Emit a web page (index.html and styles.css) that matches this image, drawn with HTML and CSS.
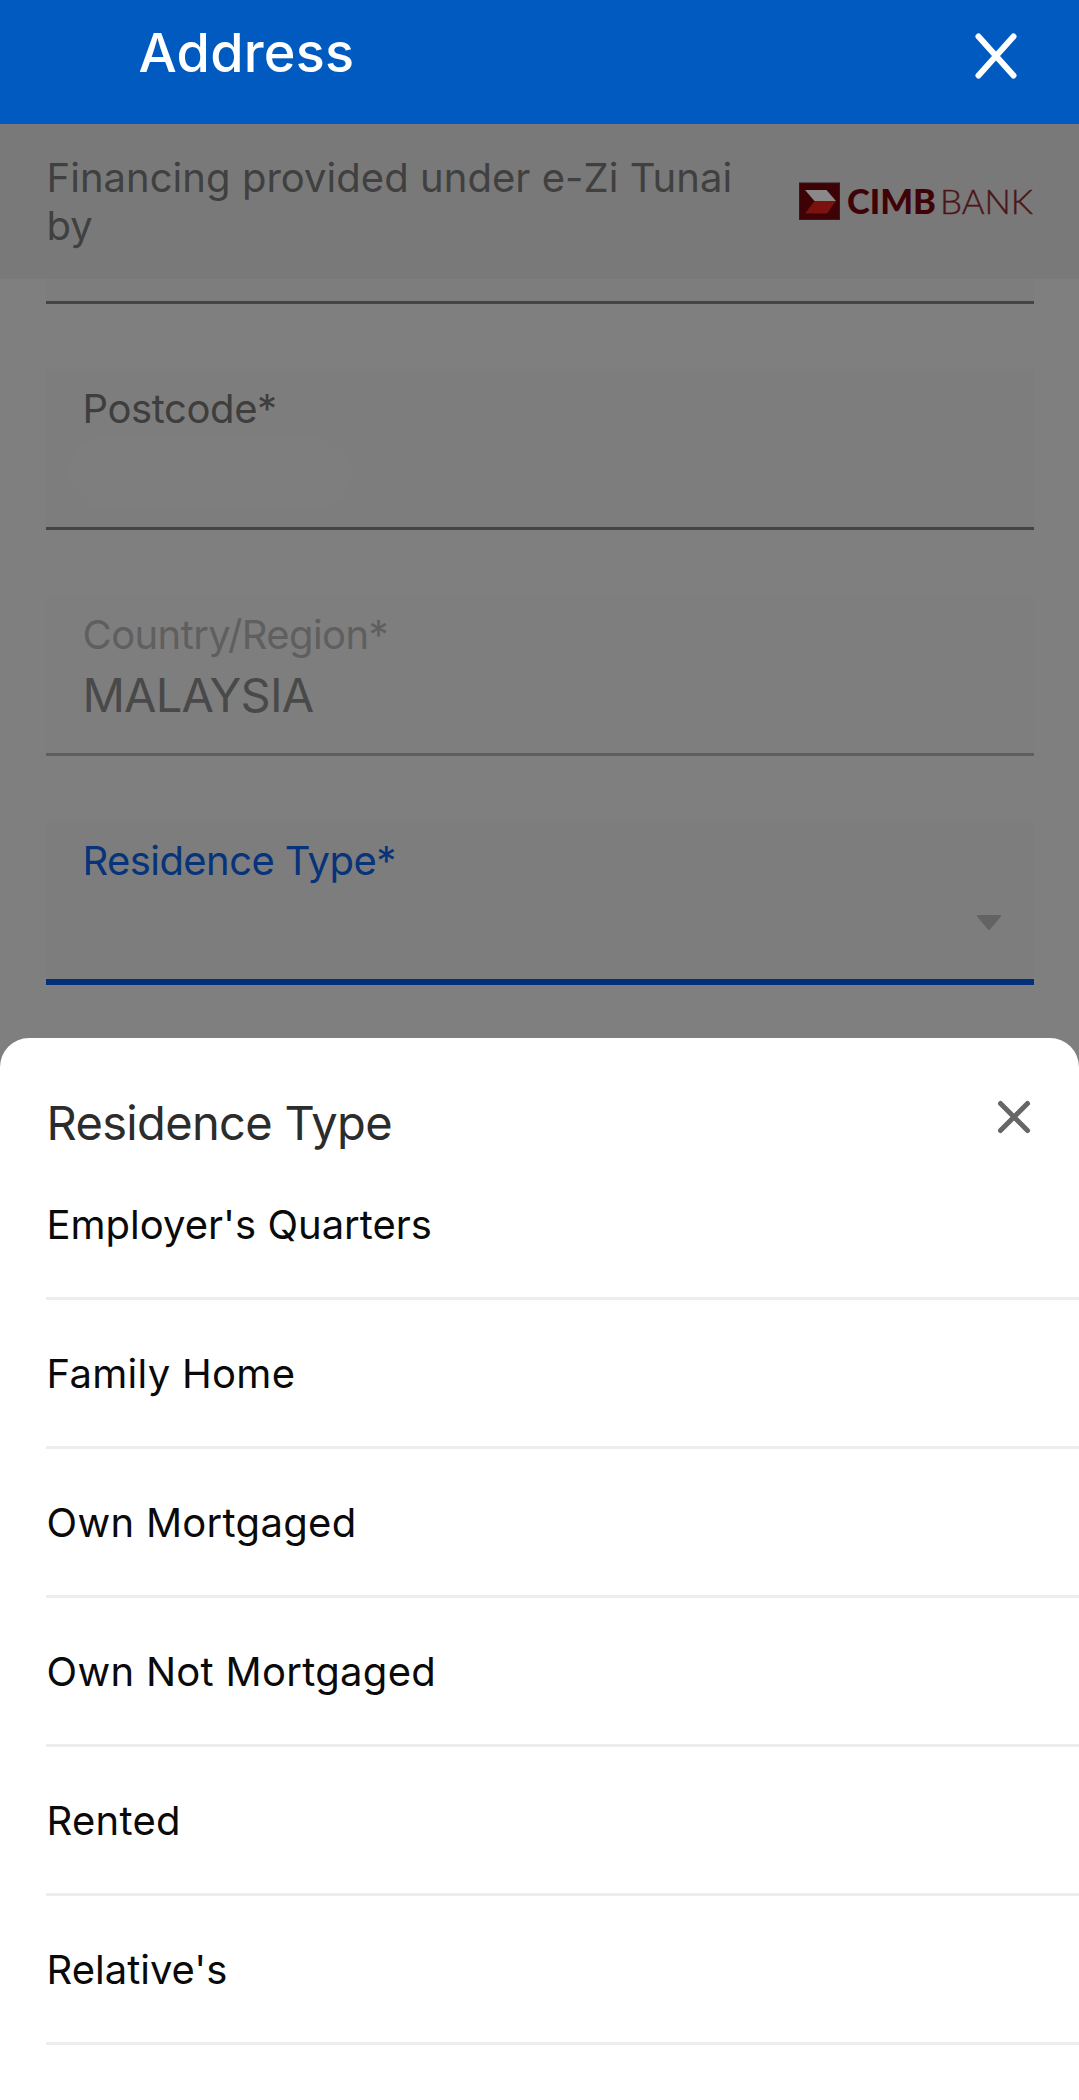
FILE: index.html
```html
<!DOCTYPE html>
<html lang="en">
<head>
<meta charset="utf-8">
<title>Address</title>
<link rel="stylesheet" href="styles.css">
</head>
<body>
<div class="screen">
  <header class="topbar">
    <h1 class="topbar-title">Address</h1>
    <svg class="topbar-close" viewBox="0 0 42 46" width="42" height="46" aria-label="Close"><path d="M3.5 3.5 38.5 42.5M38.5 3.5 3.5 42.5"/></svg>
  </header>
  <section class="provider">
    <p class="provider-text"><span class="provider-line">Financing provided under e-Zi Tunai</span> by</p>
    <svg class="provider-logo" viewBox="0 0 240 48" width="240" height="48" aria-label="CIMB Bank">
      <rect class="logo-box" x="1.5" y="1" width="40" height="36.5"/>
      <path class="logo-top" d="M7 8H28.5L38 19H16.5Z"/>
      <path class="logo-bottom" d="M16.5 19H38L29 31.5H7Z"/>
      <text class="logo-cimb" x="49" y="32.3" textLength="89" lengthAdjust="spacingAndGlyphs">CIMB</text>
      <text class="logo-bank" x="142" y="32.3" textLength="93" lengthAdjust="spacingAndGlyphs">BANK</text>
    </svg>
  </section>
  <main class="form">
    <div class="field field-cut"></div>
    <div class="field">
      <label class="label label-short">Postcode*</label>
      <div class="mask"></div>
    </div>
    <div class="field field-disabled">
      <label class="label">Country/Region*</label>
      <div class="value">MALAYSIA</div>
    </div>
    <div class="field field-active">
      <label class="label">Residence Type*</label>
      <svg class="caret" viewBox="0 0 26 16" width="26" height="16"><path d="M2 1H24L13 14Z"/></svg>
    </div>
  </main>
  <section class="sheet">
    <div class="sheet-head">
      <h2 class="sheet-title">Residence Type</h2>
      <svg class="sheet-close" viewBox="0 0 34 34" width="34" height="34" aria-label="Close"><path d="M3.5 3.5 30.5 30.5M30.5 3.5 3.5 30.5"/></svg>
    </div>
    <ul class="options">
      <li class="option option-tight">Employer's Quarters</li>
      <li class="option">Family Home</li>
      <li class="option">Own Mortgaged</li>
      <li class="option">Own Not Mortgaged</li>
      <li class="option">Rented</li>
      <li class="option option-tight">Relative's</li>
    </ul>
  </section>
</div>
</body>
</html>
```
FILE: styles.css
```css
* { box-sizing: border-box; margin: 0; padding: 0; }

body {
  background: #7f7f7f;
  font-family: Inter, "Liberation Sans", sans-serif;
  font-weight: 400;
}

.screen {
  display: flex;
  flex-direction: column;
  width: 1079px;
  height: 2100px;
  overflow: hidden;
}

.topbar {
  display: flex;
  justify-content: space-between;
  align-items: flex-start;
  height: 124px;
  padding: 20px 62px 0 138.5px;
  background: #005abf;
}

.topbar-title {
  color: #fff;
  font-size: 54px;
  font-weight: 500;
  line-height: 66px;
  letter-spacing: 0.2px;
}

.topbar-close { margin-top: 13px; }
.topbar-close path { fill: none; stroke: #fff; stroke-width: 6; stroke-linecap: round; }

.provider {
  display: flex;
  justify-content: space-between;
  height: 155px;
  padding: 30px 41px 0 46.5px;
  background: #797979;
}

.provider-text {
  width: 700px;
  color: #404040;
  font-size: 40px;
  line-height: 48px;
  letter-spacing: 0.04px;
}

.provider-line { white-space: nowrap; }
.provider-logo { flex: none; margin-top: 28px; }
.logo-box { fill: #3c0205; stroke: #35191b; stroke-width: 1; }
.logo-top { fill: #898989; }
.logo-bottom { fill: #7b120f; }
.logo-cimb { fill: #3f0307; font: 900 34px Lato, sans-serif; }
.logo-bank { fill: #4b1519; stroke: #4b1519; stroke-width: 0.4; font: 300 34px Lato, sans-serif; }

.form {
  display: flex;
  flex-direction: column;
  gap: 65px;
  height: 759px;
  padding: 0 45px 0 46px;
}

.field {
  position: relative;
  flex: none;
  height: 161px;
  padding: 16px 36px 0 36.5px;
  background: #7d7d7d;
  border-bottom: 3px solid #444;
}

.field-cut { height: 25px; }
.field-disabled { background: #7e7e7e; border-bottom-color: #5f5f5f; }
.field-active { height: 164px; border-bottom: 6px solid #04307b; }

.label {
  display: block;
  color: #3e3e3e;
  font-size: 40px;
  line-height: 48px;
  letter-spacing: -0.58px;
}

.label-short { letter-spacing: -0.4px; }
.field-disabled .label { color: #5f5f5f; }
.field-active .label { color: #07337a; }

.mask {
  width: 284px;
  height: 72px;
  margin: 4px 0 0 -15px;
  border-radius: 36px;
  background: #7e7e7e;
}

.value {
  color: #494949;
  font-size: 47px;
  line-height: 56px;
  margin-top: 8px;
  letter-spacing: -0.85px;
}

.caret { position: absolute; right: 32px; top: 94px; }
.caret path { fill: #636363; stroke: #636363; stroke-width: 2; stroke-linejoin: round; }

.sheet {
  flex: 1;
  background: #fff;
  border-radius: 29px 29px 0 0;
}

.sheet-head {
  display: flex;
  justify-content: space-between;
  height: 113px;
  padding: 57px 48px 0 46.5px;
}

.sheet-title {
  color: #2c2c2c;
  font-size: 47px;
  font-weight: 400;
  line-height: 56px;
  letter-spacing: -0.65px;
  white-space: nowrap;
}

.sheet-close { margin-top: 5px; }
.sheet-close path { fill: none; stroke: #666; stroke-width: 5; stroke-linecap: round; }

.options { list-style: none; padding-left: 46px; }

.option {
  height: 149px;
  padding: 50px 0 0 0.5px;
  border-bottom: 3px solid #ededed;
  color: #0a0a0a;
  font-size: 40px;
  line-height: 48px;
  letter-spacing: 0.3px;
}

.option-tight { letter-spacing: 0; }
```
